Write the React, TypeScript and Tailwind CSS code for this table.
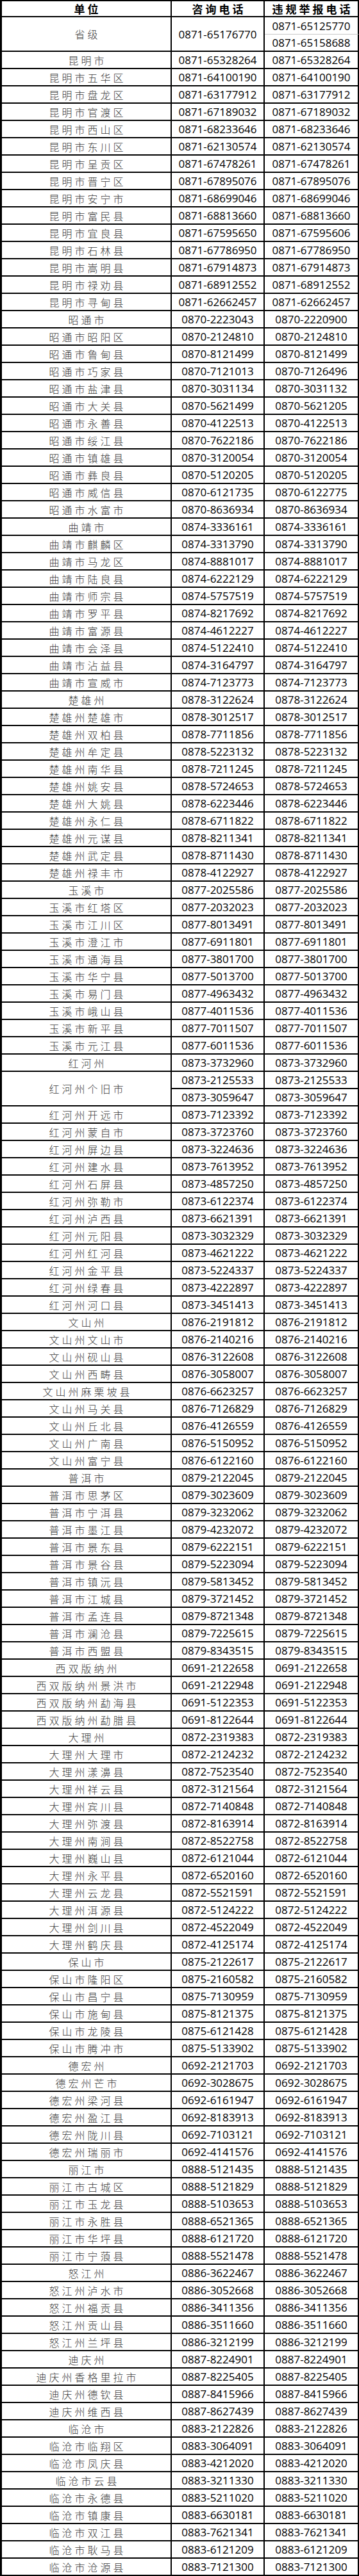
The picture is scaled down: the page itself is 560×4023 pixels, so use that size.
import React from "react";

type R = [string, string, string?];

const before: R[] = [
  ["昆明市", "0871-65328264"],
  ["昆明市五华区", "0871-64100190"],
  ["昆明市盘龙区", "0871-63177912"],
  ["昆明市官渡区", "0871-67189032"],
  ["昆明市西山区", "0871-68233646"],
  ["昆明市东川区", "0871-62130574"],
  ["昆明市呈贡区", "0871-67478261"],
  ["昆明市晋宁区", "0871-67895076"],
  ["昆明市安宁市", "0871-68699046"],
  ["昆明市富民县", "0871-68813660"],
  ["昆明市宜良县", "0871-67595650", "0871-67595606"],
  ["昆明市石林县", "0871-67786950"],
  ["昆明市嵩明县", "0871-67914873"],
  ["昆明市禄劝县", "0871-68912552"],
  ["昆明市寻甸县", "0871-62662457"],
  ["昭通市", "0870-2223043", "0870-2220900"],
  ["昭通市昭阳区", "0870-2124810"],
  ["昭通市鲁甸县", "0870-8121499"],
  ["昭通市巧家县", "0870-7121013", "0870-7126496"],
  ["昭通市盐津县", "0870-3031134", "0870-3031132"],
  ["昭通市大关县", "0870-5621499", "0870-5621205"],
  ["昭通市永善县", "0870-4122513"],
  ["昭通市绥江县", "0870-7622186"],
  ["昭通市镇雄县", "0870-3120054"],
  ["昭通市彝良县", "0870-5120205"],
  ["昭通市威信县", "0870-6121735", "0870-6122775"],
  ["昭通市水富市", "0870-8636934"],
  ["曲靖市", "0874-3336161"],
  ["曲靖市麒麟区", "0874-3313790"],
  ["曲靖市马龙区", "0874-8881017"],
  ["曲靖市陆良县", "0874-6222129"],
  ["曲靖市师宗县", "0874-5757519"],
  ["曲靖市罗平县", "0874-8217692"],
  ["曲靖市富源县", "0874-4612227"],
  ["曲靖市会泽县", "0874-5122410"],
  ["曲靖市沾益县", "0874-3164797"],
  ["曲靖市宣威市", "0874-7123773"],
  ["楚雄州", "0878-3122624"],
  ["楚雄州楚雄市", "0878-3012517"],
  ["楚雄州双柏县", "0878-7711856"],
  ["楚雄州牟定县", "0878-5223132"],
  ["楚雄州南华县", "0878-7211245"],
  ["楚雄州姚安县", "0878-5724653"],
  ["楚雄州大姚县", "0878-6223446"],
  ["楚雄州永仁县", "0878-6711822"],
  ["楚雄州元谋县", "0878-8211341"],
  ["楚雄州武定县", "0878-8711430"],
  ["楚雄州禄丰市", "0878-4122927"],
  ["玉溪市", "0877-2025586"],
  ["玉溪市红塔区", "0877-2032023"],
  ["玉溪市江川区", "0877-8013491"],
  ["玉溪市澄江市", "0877-6911801"],
  ["玉溪市通海县", "0877-3801700"],
  ["玉溪市华宁县", "0877-5013700"],
  ["玉溪市易门县", "0877-4963432"],
  ["玉溪市峨山县", "0877-4011536"],
  ["玉溪市新平县", "0877-7011507"],
  ["玉溪市元江县", "0877-6011536"],
  ["红河州", "0873-3732960"],
];

const after: R[] = [
  ["红河州开远市", "0873-7123392"],
  ["红河州蒙自市", "0873-3723760"],
  ["红河州屏边县", "0873-3224636"],
  ["红河州建水县", "0873-7613952"],
  ["红河州石屏县", "0873-4857250"],
  ["红河州弥勒市", "0873-6122374"],
  ["红河州泸西县", "0873-6621391"],
  ["红河州元阳县", "0873-3032329"],
  ["红河州红河县", "0873-4621222"],
  ["红河州金平县", "0873-5224337"],
  ["红河州绿春县", "0873-4222897"],
  ["红河州河口县", "0873-3451413"],
  ["文山州", "0876-2191812"],
  ["文山州文山市", "0876-2140216"],
  ["文山州砚山县", "0876-3122608"],
  ["文山州西畴县", "0876-3058007"],
  ["文山州麻栗坡县", "0876-6623257"],
  ["文山州马关县", "0876-7126829"],
  ["文山州丘北县", "0876-4126559"],
  ["文山州广南县", "0876-5150952"],
  ["文山州富宁县", "0876-6122160"],
  ["普洱市", "0879-2122045"],
  ["普洱市思茅区", "0879-3023609"],
  ["普洱市宁洱县", "0879-3232062"],
  ["普洱市墨江县", "0879-4232072"],
  ["普洱市景东县", "0879-6222151"],
  ["普洱市景谷县", "0879-5223094"],
  ["普洱市镇沅县", "0879-5813452"],
  ["普洱市江城县", "0879-3721452"],
  ["普洱市孟连县", "0879-8721348"],
  ["普洱市澜沧县", "0879-7225615"],
  ["普洱市西盟县", "0879-8343515"],
  ["西双版纳州", "0691-2122658"],
  ["西双版纳州景洪市", "0691-2122948"],
  ["西双版纳州勐海县", "0691-5122353"],
  ["西双版纳州勐腊县", "0691-8122644"],
  ["大理州", "0872-2319383"],
  ["大理州大理市", "0872-2124232"],
  ["大理州漾濞县", "0872-7523540"],
  ["大理州祥云县", "0872-3121564"],
  ["大理州宾川县", "0872-7140848"],
  ["大理州弥渡县", "0872-8163914"],
  ["大理州南涧县", "0872-8522758"],
  ["大理州巍山县", "0872-6121044"],
  ["大理州永平县", "0872-6520160"],
  ["大理州云龙县", "0872-5521591"],
  ["大理州洱源县", "0872-5124222"],
  ["大理州剑川县", "0872-4522049"],
  ["大理州鹤庆县", "0872-4125174"],
  ["保山市", "0875-2122617"],
  ["保山市隆阳区", "0875-2160582"],
  ["保山市昌宁县", "0875-7130959"],
  ["保山市施甸县", "0875-8121375"],
  ["保山市龙陵县", "0875-6121428"],
  ["保山市腾冲市", "0875-5133902"],
  ["德宏州", "0692-2121703"],
  ["德宏州芒市", "0692-3028675"],
  ["德宏州梁河县", "0692-6161947"],
  ["德宏州盈江县", "0692-8183913"],
  ["德宏州陇川县", "0692-7103121"],
  ["德宏州瑞丽市", "0692-4141576"],
  ["丽江市", "0888-5121435"],
  ["丽江市古城区", "0888-5121829"],
  ["丽江市玉龙县", "0888-5103653"],
  ["丽江市永胜县", "0888-6521365"],
  ["丽江市华坪县", "0888-6121720"],
  ["丽江市宁蒗县", "0888-5521478"],
  ["怒江州", "0886-3622467"],
  ["怒江州泸水市", "0886-3052668"],
  ["怒江州福贡县", "0886-3411356"],
  ["怒江州贡山县", "0886-3511660"],
  ["怒江州兰坪县", "0886-3212199"],
  ["迪庆州", "0887-8224901"],
  ["迪庆州香格里拉市", "0887-8225405"],
  ["迪庆州德钦县", "0887-8415966"],
  ["迪庆州维西县", "0887-8627439"],
  ["临沧市", "0883-2122826"],
  ["临沧市临翔区", "0883-3064091"],
  ["临沧市凤庆县", "0883-4212020"],
  ["临沧市云县", "0883-3211330"],
  ["临沧市永德县", "0883-5211020"],
  ["临沧市镇康县", "0883-6630181"],
  ["临沧市双江县", "0883-7621341"],
  ["临沧市耿马县", "0883-6121209"],
  ["临沧市沧源县", "0883-7121300"],
];

const cell = "flex items-center justify-center border-r-2 border-b-2 border-black";
const nameCls =
  cell +
  " [font-family:'Noto_Sans_CJK_SC',sans-serif] text-[16px] font-light tracking-[4px] pl-[4px] text-[#3c3c3c] leading-none";
const numCls =
  cell + " [font-family:'Open_Sans',sans-serif] text-[17px] text-black leading-none";
const headCls =
  cell +
  " [font-family:'Noto_Sans_CJK_SC',sans-serif] text-[17px] font-bold tracking-[4px] pl-[4px] text-black leading-none";

function Rows({ data }: { data: R[] }) {
  return (
    <>
      {data.map(([n, c, r]) => (
        <React.Fragment key={n}>
          <div className={nameCls}>{n}</div>
          <div className={numCls}>{c}</div>
          <div className={numCls}>{r ?? c}</div>
        </React.Fragment>
      ))}
    </>
  );
}

export default function App() {
  return (
    <div className="w-[560px] bg-white">
      <div className="grid w-[560px] grid-cols-[265px_145px_147px] grid-rows-[25px] auto-rows-[27px] border-l-[3px] border-t-2 border-black">
        <div className={headCls}>单位</div>
        <div className={headCls}>咨询电话</div>
        <div className={headCls}>违规举报电话</div>

        <div className={nameCls + " row-span-2"}>省级</div>
        <div className={numCls + " row-span-2"}>0871-65176770</div>
        <div className="flex items-center justify-center border-r-2 border-b border-r-black border-b-[#c8c8c8] [font-family:'Open_Sans',sans-serif] text-[17px] text-black leading-none">
          0871-65125770
        </div>
        <div className={numCls}>0871-65158688</div>

        <Rows data={before} />

        <div className={nameCls + " row-span-2"}>红河州个旧市</div>
        <div className={numCls}>0873-2125533</div>
        <div className={numCls}>0873-2125533</div>
        <div className={numCls}>0873-3059647</div>
        <div className={numCls}>0873-3059647</div>

        <Rows data={after} />
      </div>
    </div>
  );
}
